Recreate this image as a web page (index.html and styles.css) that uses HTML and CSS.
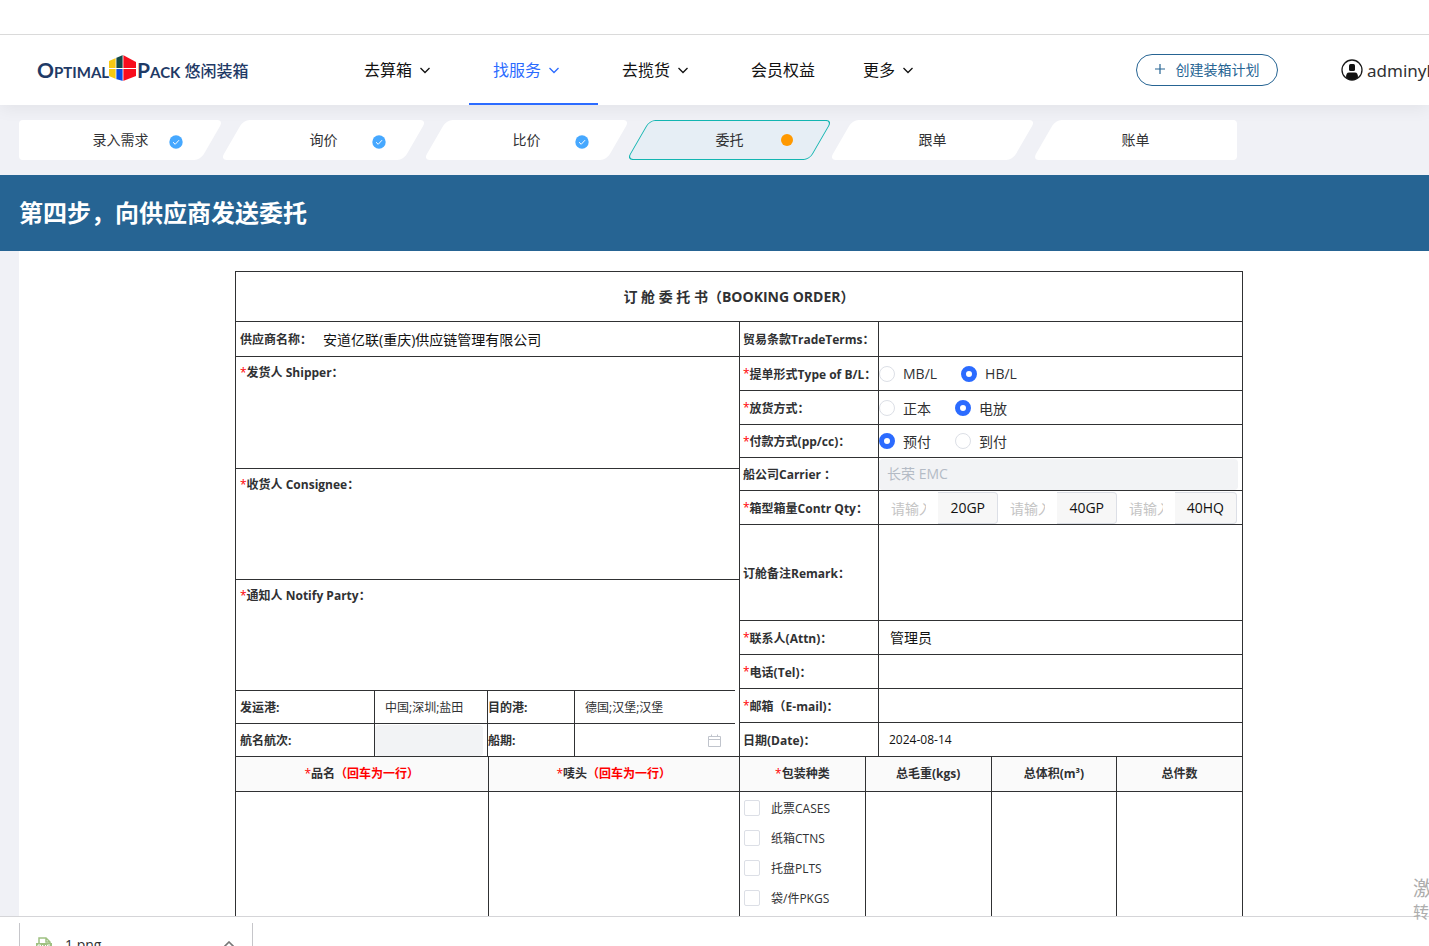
FILE: index.html
```html
<!DOCTYPE html>
<html lang="zh-CN">
<head>
<meta charset="utf-8">
<title>Optimal Pack 悠闲装箱</title>
<link rel="stylesheet" href="styles.css">
</head>
<body>
<div class="page">
  <div class="topstrip"></div>
  <header class="header">
    <a class="logo" href="#">
      <span class="logo-en">Optimal</span>
      <svg class="logo-cube" width="28" height="26" viewBox="0 0 28 26">
        <path d="M0 6 7 3V13H0z" fill="#f6c915"/><path d="M0 14H7V24L0 21z" fill="#f6c915"/>
        <path d="M7 3 14 0V13H7z" fill="#134a4a"/><path d="M7 14H14V26L7 24z" fill="#0b4be0"/>
        <path d="M14 0 27 7V13H14z" fill="#f80d1d"/><path d="M14 14H27V21L14 26z" fill="#f80d1d"/>
        <path d="M7 3V24M14 0V26M0 13.5H27" stroke="#fff" stroke-width=".8" fill="none"/>
      </svg>
      <span class="logo-en">Pack</span>
      <span class="logo-cn">悠闲装箱</span>
    </a>
    <nav class="nav">
      <a class="nav-item" href="#">去算箱<svg class="chev" width="10" height="8" viewBox="0 0 10 8"><path d="M.5 2 5 6.500 9.500 2"/></svg></a>
      <a class="nav-item active" href="#">找服务<svg class="chev" width="10" height="8" viewBox="0 0 10 8"><path d="M.5 2 5 6.500 9.500 2"/></svg></a>
      <a class="nav-item" href="#">去揽货<svg class="chev" width="10" height="8" viewBox="0 0 10 8"><path d="M.5 2 5 6.500 9.500 2"/></svg></a>
      <a class="nav-item" href="#">会员权益</a>
      <a class="nav-item" href="#">更多<svg class="chev" width="10" height="8" viewBox="0 0 10 8"><path d="M.5 2 5 6.500 9.500 2"/></svg></a>
    </nav>
    <button class="create" type="button"><svg width="10" height="10" viewBox="0 0 10 10"><path d="M5 0V10M0 5H10" stroke="currentColor" stroke-width="1.2"/></svg>创建装箱计划</button>
    <a class="user" href="#">
      <svg width="22" height="22" viewBox="0 0 22 22"><circle cx="11" cy="11" r="10" fill="#fff" stroke="#1a1a1a" stroke-width="1.3"/><rect x="8" y="5" width="6" height="7" rx="1.500" fill="#111"/><path d="M5 18.500Q5 13.500 8 13.500H14Q17 13.500 17 18.500Q14 21 11 21T5 18.500z" fill="#111"/></svg>
      <span>adminyl</span>
    </a>
  </header>

  <ol class="steps">
    <li class="step first"><span>录入需求</span><svg class="mark" width="14" height="14" viewBox="0 0 14 14"><circle cx="7" cy="7" r="6.700" fill="#46a8ff"/><path d="M4 7.200 6.200 9.300 10 5.200" fill="none" stroke="#fff"/></svg></li>
    <li class="step"><span>询价</span><svg class="mark" width="14" height="14" viewBox="0 0 14 14"><circle cx="7" cy="7" r="6.700" fill="#46a8ff"/><path d="M4 7.200 6.200 9.300 10 5.200" fill="none" stroke="#fff"/></svg></li>
    <li class="step"><span>比价</span><svg class="mark" width="14" height="14" viewBox="0 0 14 14"><circle cx="7" cy="7" r="6.700" fill="#46a8ff"/><path d="M4 7.200 6.200 9.300 10 5.200" fill="none" stroke="#fff"/></svg></li>
    <li class="step current"><span>委托</span><i class="mark dot"></i></li>
    <li class="step"><span>跟单</span></li>
    <li class="step last"><span>账单</span></li>
  </ol>

  <h1 class="banner">第四步，向供应商发送委托</h1>

  <main class="content">
    <form class="order">
      <h2 class="title">订 舱 委 托 书（BOOKING ORDER）</h2>
      <div class="halves">
        <div class="left">
          <div class="supplier line"><label for="supplier">供应商名称：</label><input id="supplier" class="field" value="安道亿联(重庆)供应链管理有限公司"></div>
          <div class="party line"><label for="shipper"><i>*</i>发货人 Shipper：</label><textarea id="shipper"></textarea></div>
          <div class="party line"><label for="consignee"><i>*</i>收货人 Consignee：</label><textarea id="consignee"></textarea></div>
          <div class="party line"><label for="notify"><i>*</i>通知人 Notify Party：</label><textarea id="notify"></textarea></div>
          <div class="ports">
            <label for="pol">发运港:</label><div class="cell"><input id="pol" class="small" value="中国;深圳;盐田"></div>
            <label class="cell tight" for="pod">目的港:</label><div class="cell"><input id="pod" class="small" value="德国;汉堡;汉堡"></div>
            <label for="vessel">航名航次:</label><div class="cell vessel"><input id="vessel" class="small" disabled></div>
            <label class="cell tight" for="etd">船期:</label>
            <div class="cell date"><input id="etd" class="small"><svg width="13" height="13" viewBox="0 0 13 13"><path d="M.5 2.500H12.500V12.500H.5zM.5 5.500H12.500M3.500.5V3M9.500.5V3" fill="none" stroke="#c0c4cc"/></svg></div>
          </div>
        </div>
        <div class="right">
          <label for="terms">贸易条款TradeTerms：</label><div class="cell"><input id="terms" class="field"></div>
          <span class="lbl"><i>*</i>提单形式Type of B/L：</span>
          <div class="cell radios"><label><input type="radio" name="bl">MB/L</label><label><input type="radio" name="bl" checked>HB/L</label></div>
          <span class="lbl"><i>*</i>放货方式：</span>
          <div class="cell radios"><label><input type="radio" name="rel">正本</label><label><input type="radio" name="rel" checked>电放</label></div>
          <span class="lbl"><i>*</i>付款方式(pp/cc)：</span>
          <div class="cell radios"><label><input type="radio" name="pay" checked>预付</label><label><input type="radio" name="pay">到付</label></div>
          <label for="carrier">船公司Carrier ：</label><div class="cell carrier"><input id="carrier" value="长荣 EMC" disabled></div>
          <span class="lbl"><i>*</i>箱型箱量Contr Qty：</span>
          <div class="cell qty">
            <label><input placeholder="请输入"><span>20GP</span></label>
            <label><input placeholder="请输入"><span>40GP</span></label>
            <label><input placeholder="请输入"><span>40HQ</span></label>
          </div>
          <label for="remark">订舱备注Remark：</label><div class="cell"><textarea id="remark"></textarea></div>
          <label for="attn"><i>*</i>联系人(Attn)：</label><div class="cell"><input id="attn" class="field" value="管理员"></div>
          <label for="tel"><i>*</i>电话(Tel)：</label><div class="cell"><input id="tel" class="field"></div>
          <label for="mail"><i>*</i>邮箱（E-mail)：</label><div class="cell"><input id="mail" class="field"></div>
          <label for="date">日期(Date)：</label><div class="cell"><input id="date" class="small dark" value="2024-08-14"></div>
        </div>
      </div>
      <table class="goods">
        <colgroup><col class="wide"><col class="wide"><col><col><col><col></colgroup>
        <thead><tr><th><i>*</i>品名<b>（回车为一行）</b></th><th><i>*</i>唛头<b>（回车为一行）</b></th><th><i>*</i>包装种类</th><th>总毛重(kgs)</th><th>总体积(m³)</th><th>总件数</th></tr></thead>
        <tbody><tr>
          <td><textarea aria-label="品名"></textarea></td><td><textarea aria-label="唛头"></textarea></td>
          <td class="packs">
            <label><input type="checkbox">此票CASES</label>
            <label><input type="checkbox">纸箱CTNS</label>
            <label><input type="checkbox">托盘PLTS</label>
            <label><input type="checkbox">袋/件PKGS</label>
          </td>
          <td><textarea aria-label="总毛重"></textarea></td><td><textarea aria-label="总体积"></textarea></td><td><textarea aria-label="总件数"></textarea></td>
        </tr></tbody>
      </table>
    </form>
  </main>

  <footer class="downloads">
    <div class="file">
      <svg width="16" height="20" viewBox="0 0 16 20"><path d="M3 6V1H10L14 5V6M10 1V5H14" fill="none" stroke="#9fc182" stroke-width="1.500"/><rect y="6" width="16" height="9" fill="#9fc182"/><path d="M2 13V8H4.500V11H2M6.500 13V8L9.500 13V8M14 8H11.500V13H14V11" fill="none" stroke="#fff"/><path d="M3 15V19H14V15" fill="none" stroke="#9fc182"/></svg>
      <span>1.png</span>
      <button type="button" aria-label="更多操作"><svg width="10" height="6" viewBox="0 0 10 6"><path d="M.5 5.500 5 1 9.500 5.500" fill="none" stroke="#777" stroke-width="1.600"/></svg></button>
    </div>
  </footer>
  <div class="watermark"><p>激</p><p class="sub">转</p></div>
</div>
</body>
</html>
```

FILE: styles.css
```css
* { box-sizing: border-box; }
body, h1, h2, p, ol { margin: 0; padding: 0; }
body, input, textarea, button {
  font-family: "Open Sans", "Noto Sans", "Noto Sans CJK SC", sans-serif;
  font-size: 14px;
  color: #303133;
}
input, textarea {
  border: 0;
  margin: 0;
  padding: 0;
  background: transparent;
  min-width: 0;
  resize: none;
  outline: none;
}
a { color: inherit; text-decoration: none; }
svg { flex: none; display: block; }

.page {
  position: relative;
  display: flex;
  flex-direction: column;
  height: 100vh;
  overflow: hidden;
  background: #f0f1f6;
}
.topstrip { flex: none; z-index: 1; height: 35px; background: #fff; border-bottom: 1px solid #dadada; }

.header {
  flex: none;
  display: flex;
  align-items: center;
  height: 70px;
  padding-left: 37px;
  background: #fff;
  box-shadow: 0 4px 16px rgba(0, 0, 0, .06);
}
.logo { display: flex; align-items: center; width: 303px; color: #1f3a66; white-space: nowrap; }
.logo-en { font-family: Lato, sans-serif; font-size: 21px; line-height: 24px; font-weight: 700; font-variant: small-caps; }
.logo-cube { margin-bottom: 4px; }
.logo-cn { margin-left: 4px; font-size: 16px; font-weight: 500; font-family: "Noto Sans CJK SC", sans-serif; }
.nav { display: flex; align-self: stretch; font-size: 16px; color: #111; }
.nav-item { display: flex; align-items: center; padding: 0 24px; border-bottom: 2px solid transparent; }
.nav-item.active { color: #2b6bff; border-color: #2b6bff; }
.chev { margin: 2px 15px 0 8px; fill: none; stroke: currentColor; stroke-width: 1.3; }
.create {
  display: flex;
  align-items: center;
  justify-content: center;
  gap: 11px;
  width: 142px;
  height: 32px;
  margin-left: auto;
  padding: 0 0 2px;
  border: 1px solid #266493;
  border-radius: 16px;
  background: #fff;
  color: #266493;
}
.user {
  display: flex;
  align-items: center;
  gap: 4px;
  width: 88px;
  margin-left: 63px;
  font-size: 17px;
  font-family: "Noto Sans", sans-serif;
}

.steps { flex: none; display: flex; height: 70px; padding: 15px 19px; list-style: none; }
.step {
  position: relative;
  display: flex;
  align-items: center;
  justify-content: center;
  width: 203px;
  height: 40px;
  padding-bottom: 2px;
}
.step::before, .first::after, .last::after {
  content: "";
  position: absolute;
  inset: 0 10px;
  border-radius: 6px;
  background: #fff;
}
.step::before { transform: skewX(-30deg); }
.first::after { left: 0; right: 50%; border-radius: 4px; }
.last::after { left: 50%; right: 0; border-radius: 4px; }
.current::before { background: #e6eef5; border: 1px solid #13b5b1; }
.step span, .mark { position: relative; z-index: 1; }
.mark { position: absolute; left: 150px; top: 15px; }
.dot { top: 14px; left: 153px; width: 12px; height: 12px; border-radius: 50%; background: #ff9900; }

.banner {
  flex: none;
  padding: 0 19px;
  background: #266493;
  color: #fff;
  font-size: 24px;
  line-height: 76px;
}

.content {
  flex: 1;
  min-height: 0;
  margin-left: 19px;
  padding: 20px 186px 0 216px;
  overflow: hidden;
  background: #fff;
}
.order { border: 1px solid #303133; font-size: 12px; }
.order b { color: #f00; font-weight: 700; }
.order i { color: #f00; font-weight: 400; font-style: normal; }
.title { font-size: 14px; line-height: 49px; text-align: center; }
.halves { display: grid; grid-template-columns: 1fr 1fr; }
.left > .line { border-top: 1px solid #303133; padding: 0 4px; }
.left label, .right > label, .lbl { font-weight: 700; white-space: nowrap; }
.supplier { display: flex; align-items: center; height: 35px; }
.field { width: 100%; height: 100%; padding: 0 0 1px 11px; color: #111; }
.party { display: flex; flex-direction: column; height: 111px; line-height: 32px; }
.supplier + .party { height: 112px; }
.party textarea { flex: 1; }
.ports { display: grid; grid-template-columns: 138px 113px 87px 1fr; grid-auto-rows: 33px; margin-right: 4px; }
.ports > *, .right > * { border-top: 1px solid #303133; }
.ports > label { padding: 1px 0 0 4px; line-height: 32px; }
.ports > label.tight { padding-left: 0; }
.cell { border-left: 1px solid #303133; min-width: 0; overflow: hidden; }
.small { width: 100%; height: 100%; padding-left: 10px; font-size: 12px; }
.dark { color: #111; }
.vessel { padding: 1px 4px 0 0; }
.vessel input, .carrier input { background: #f2f3f5; border-radius: 4px; }
.date { display: flex; align-items: center; padding-right: 14px; }

.right {
  display: grid;
  grid-template-columns: 138px 1fr;
  grid-template-rows: 35px 34px 34px 33px 33px 34px 96px 34px 34px 34px 34px;
  border-left: 1px solid #303133;
}
.right > label, .lbl { display: flex; align-items: center; padding-left: 3px; }
.radios { display: flex; align-items: center; gap: 24px; font-size: 14px; }
.radios label { display: flex; align-items: center; gap: 8px; }
input[type="radio"] {
  appearance: none;
  width: 16px;
  height: 16px;
  border: 1px solid #dcdfe6;
  border-radius: 50%;
  background: #fff;
}
input[type="radio"]:checked { border: 5px solid #2b6bff; }
.carrier { padding: 1px 4px 0 0; }
.carrier input { width: 100%; height: 100%; padding: 0 8px 4px; color: #b4bbc5; }
.qty { display: grid; grid-template-columns: 119px 119px 120px; padding-top: 1px; }
.qty label { display: flex; }
.qty input { flex: 1; margin: 0 12px; width: 20px; }
.qty input::placeholder { color: #c4c4c4; }
.qty span {
  padding: 0 12px;
  border: 1px solid #dcdfe6;
  border-left: 0;
  border-radius: 0 4px 4px 0;
  background: #f7f7f7;
  color: #111;
  font-size: 14px;
  line-height: 30px;
}

.goods { width: 100%; table-layout: fixed; border-collapse: separate; border-spacing: 0; }
.goods .wide { width: 25%; }
.goods th, .goods td { padding: 0; border-top: 1px solid #303133; border-left: 1px solid #303133; }
.goods th:first-child, .goods td:first-child { border-left: 0; }
.goods th { height: 35px; padding-bottom: 3px; background: #fafafa; }
.goods td { height: 160px; vertical-align: top; }
.goods textarea { width: 100%; height: 150px; }
.goods .packs { padding: 1px 4px; }
.packs label { display: flex; align-items: center; gap: 11px; height: 30px; }
input[type="checkbox"] {
  appearance: none;
  width: 16px;
  height: 16px;
  border: 1px solid #dcdfe6;
  border-radius: 2px;
  background: #fff;
}

.downloads { flex: none; height: 30px; padding: 6px 19px 0; overflow: hidden; background: #fff; border-top: 1px solid #d5d5d8; }
.file {
  display: flex;
  align-items: flex-start;
  width: 234px;
  height: 40px;
  padding: 14px 18px 0 16px;
  border: solid #c6c6ca;
  border-width: 0 1px;
}
.file span { flex: 1; margin-left: 13px; line-height: 16px; }
.file button { margin-top: 4px; padding: 0; border: 0; background: none; }

.watermark { position: absolute; right: 0; bottom: 24px; width: 16px; overflow: hidden; color: #adadad; font-size: 20px; line-height: 26px; }
.watermark .sub { font-size: 16px; line-height: 20px; }
```
